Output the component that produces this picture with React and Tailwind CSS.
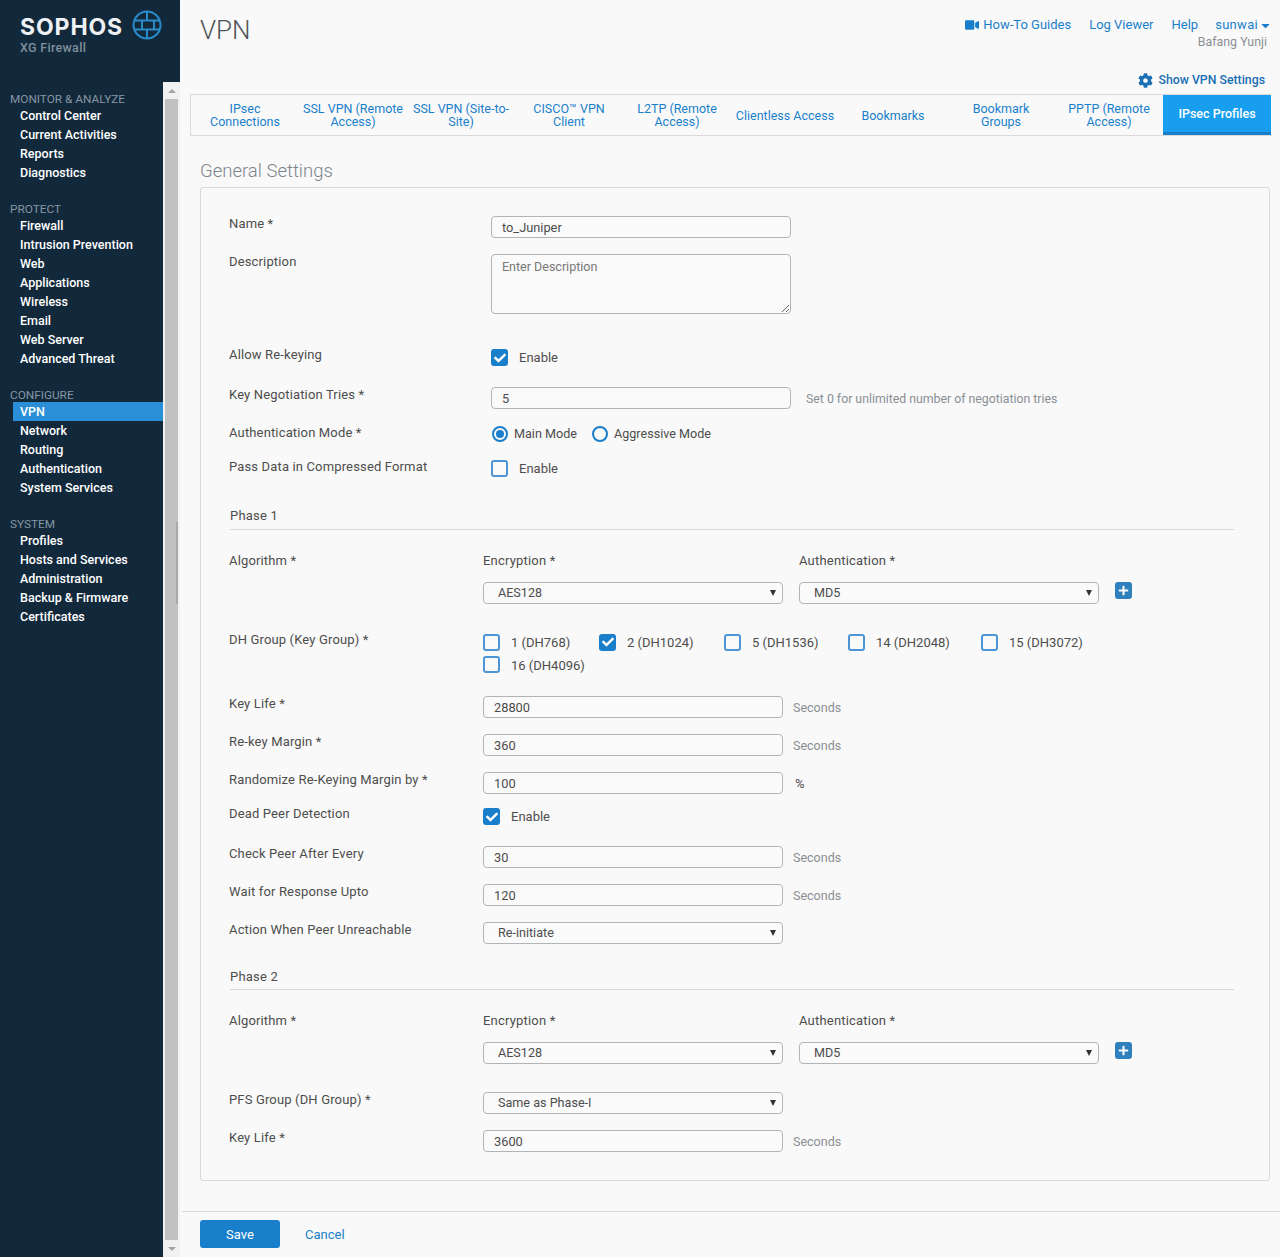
import React from "react";
import { FaVideo, FaCog, FaCaretDown, FaCheck, FaPlus } from "react-icons/fa";

const Group = ({ title, items, active, className = "" }) => (
  <div className={className}>
    <div className="h-4 pl-[10px] text-[11.8px] leading-[18px] text-[#8796a3] whitespace-nowrap">{title}</div>
    {items.map((t) => (
      <div
        key={t}
        className={
          t === active
            ? "h-[19px] ml-[13px] pl-[7px] text-[12.5px] leading-[19px] font-medium text-white bg-[#2a8fd6]"
            : "h-[19px] pl-5 text-[12.5px] leading-[19px] font-medium text-white"
        }
      >
        {t}
      </div>
    ))}
  </div>
);

const Tab = ({ children, active }) => (
  <div
    className={
      active
        ? "w-[108px] h-full flex items-center justify-center text-center text-[12.5px] leading-[13px] font-medium text-white bg-[#189eef] border-b-[3px] border-[#1a7fcb]"
        : "w-[108px] h-full flex items-center justify-center text-center text-[12.5px] leading-[13px] text-[#1a7fcb] px-[2px]"
    }
  >
    <span>{children}</span>
  </div>
);

const Label = ({ children, className = "w-[262px]" }) => (
  <div className={`${className} shrink-0 text-[13px] leading-4 tracking-[0.15px] text-[#4d4d4d] whitespace-nowrap`}>{children}</div>
);

const TextInput = ({ value, className = "w-[300px]" }) => (
  <input
    readOnly
    value={value}
    className={`${className} h-[22px] shrink-0 border border-[#b0b5b8] rounded-[4px] bg-[#fafafa] px-[10px] text-[12.8px] text-[#4d4d4d] outline-none`}
  />
);

const Select = ({ value }) => (
  <div className="w-[300px] h-[22px] shrink-0 border border-[#b0b5b8] rounded-[4px] bg-[#fafafa] pl-[14px] pr-[6px] flex items-center justify-between text-[12.6px] text-[#4d4d4d]">
    <span className="pt-px">{value}</span>
    <span className="w-0 h-0 border-x-[3.5px] border-t-[6px] border-x-transparent border-t-[#333]" />
  </div>
);

const Check = ({ on }) =>
  on ? (
    <span className="w-[17px] h-[17px] shrink-0 rounded-[3px] bg-[#1a7fcb] flex items-center justify-center">
      <FaCheck className="w-3 h-3 text-white" />
    </span>
  ) : (
    <span className="w-[17px] h-[17px] shrink-0 rounded-[3px] border-[2px] border-[#4d95d6] bg-[#fafafa]" />
  );

const CheckLabel = ({ on, children, className = "" }) => (
  <div className={`flex items-center gap-[11px] text-[13px] text-[#4d4d4d] whitespace-nowrap ${className}`}>
    <Check on={on} />
    <span className="pt-px">{children}</span>
  </div>
);

const Radio = ({ on, children }) => (
  <div className="flex items-center gap-[6px] text-[12.6px] text-[#4d4d4d] whitespace-nowrap">
    <span className="w-4 h-4 rounded-full border-[2px] border-[#1a7fcb] flex items-center justify-center">
      {on && <span className="w-2 h-2 rounded-full bg-[#1a7fcb]" />}
    </span>
    <span>{children}</span>
  </div>
);

const Unit = ({ children }) => (
  <span className="ml-[10px] pt-1 text-[12.5px] leading-4 text-[#8a8f94]">{children}</span>
);

const InputRow = ({ label, value, unit, className }) => (
  <div className={`flex ${className}`}>
    <Label className="w-[254px]">{label}</Label>
    <TextInput value={value} />
    {unit && <Unit>{unit}</Unit>}
  </div>
);

const Plus = () => (
  <span className="ml-4 w-[17px] h-[17px] rounded-[3px] bg-[#2f80bd] flex items-center justify-center">
    <FaPlus className="w-[11px] h-[11px] text-white" />
  </span>
);

const AlgoBlock = ({ labelClass }) => (
  <div className={`flex ${labelClass}`}>
    <Label className="w-[254px]">Algorithm *</Label>
    <div className="flex flex-col">
      <div className="flex h-[29px]">
        <div className="w-[316px] text-[13px] leading-4 tracking-[0.2px] text-[#4d4d4d]">Encryption *</div>
        <div className="text-[13px] leading-4 tracking-[0.2px] text-[#4d4d4d]">Authentication *</div>
      </div>
      <div className="flex">
        <Select value="AES128" />
        <div className="ml-4"><Select value="MD5" /></div>
        <Plus />
      </div>
    </div>
  </div>
);

const PhaseTitle = ({ children, className }) => (
  <div className={`ml-px border-b border-[#d9d9d9] text-[13px] leading-4 tracking-[0.2px] text-[#4d4d4d] ${className}`}>{children}</div>
);

export default function App() {
  return (
    <div className="flex w-[1280px] h-[1257px] overflow-hidden bg-[#f9f9f9] font-[Roboto,sans-serif]">
      <aside className="w-[180px] shrink-0 flex flex-col">
        <div className="h-[82px] bg-[#12293c] pl-5 flex relative">
          <div className="pt-[13px]">
            <div className="font-[Inter,sans-serif] text-[23px] leading-[28px] font-bold tracking-[0.9px] text-[#eef1f3]">SOPHOS</div>
            <div className="text-[12.5px] leading-[14px] font-medium text-[#7f8e9a] tracking-[0.3px]">XG Firewall</div>
          </div>
          <svg viewBox="0 0 30 30" className="absolute left-[132px] top-[10px] w-[30px] h-[30px]" fill="none" stroke="#2a8bc9" strokeWidth="2">
            <circle cx="15" cy="15" r="13.5" />
            <path d="M3 10.5H27M3 19.5H27M15 1.5V10.5M10 10.5V19.5M22 10.5V19.5M15 19.5V28.5" />
          </svg>
        </div>
        <div className="flex-1 flex min-h-0">
          <nav className="w-[163px] bg-[#12293c] pt-2">
            <Group title="MONITOR & ANALYZE" items={["Control Center", "Current Activities", "Reports", "Diagnostics"]} />
            <Group className="mt-[18px]" title="PROTECT" items={["Firewall", "Intrusion Prevention", "Web", "Applications", "Wireless", "Email", "Web Server", "Advanced Threat"]} />
            <Group className="mt-[18px]" title="CONFIGURE" active="VPN" items={["VPN", "Network", "Routing", "Authentication", "System Services"]} />
            <Group className="mt-[18px]" title="SYSTEM" items={["Profiles", "Hosts and Services", "Administration", "Backup & Firmware", "Certificates"]} />
          </nav>
          <div className="w-[17px] bg-[#f1f1f1] flex flex-col items-center relative">
            <div className="h-[17px] shrink-0 flex items-center justify-center">
              <span className="w-0 h-0 border-l-[4px] border-r-[4px] border-b-[4px] border-l-transparent border-r-transparent border-b-[#a3a3a3]" />
            </div>
            <div className="w-[13px] flex-1 bg-[#c1c1c1]" />
            <div className="h-[17px] shrink-0 flex items-center justify-center">
              <span className="w-0 h-0 border-l-[4px] border-r-[4px] border-t-[4px] border-l-transparent border-r-transparent border-t-[#a3a3a3]" />
            </div>
            <div className="absolute left-[13px] top-[440px] w-[2px] h-[82px] bg-[#a8a8a8]" />
          </div>
        </div>
      </aside>

      <main className="flex-1 min-w-0 flex flex-col">
        <header className="h-[94px] shrink-0 pl-5 pr-[13px] flex justify-between">
          <h1 className="pt-[14px] text-[26px] leading-[32px] font-light text-[#4d5358]">VPN</h1>
          <div className="flex flex-col items-end">
            <div className="pt-[17px] -mr-[5px] flex items-center text-[13px] leading-4 text-[#1a7fcb]">
              <FaVideo className="w-[14px] h-[14px] mr-1" />
              <span>How-To Guides</span>
              <span className="ml-[18px]">Log Viewer</span>
              <span className="ml-[18px]">Help</span>
              <span className="ml-[17px] tracking-[0.3px]">sunwai</span>
              <FaCaretDown className="w-[13px] h-[13px] ml-px" />
            </div>
            <div className="pt-px text-[12.4px] leading-4 text-[#8a8f94]">Bafang Yunji</div>
            <div className="mt-[22px] pr-[2px] flex items-center text-[12.3px] leading-4 font-medium text-[#1a6fb5]">
              <FaCog className="w-[15px] h-[15px] mr-[5px]" />
              <span>Show VPN Settings</span>
            </div>
          </div>
        </header>

        <div className="ml-[10px] w-[1081px] h-[42px] shrink-0 border-y border-l border-[#d9d9d9] flex">
          <Tab>IPsec<br />Connections</Tab>
          <Tab>SSL VPN (Remote Access)</Tab>
          <Tab>SSL VPN (Site-to-Site)</Tab>
          <Tab>CISCO™ VPN Client</Tab>
          <Tab>L2TP (Remote Access)</Tab>
          <Tab>Clientless Access</Tab>
          <Tab>Bookmarks</Tab>
          <Tab>Bookmark<br />Groups</Tab>
          <Tab>PPTP (Remote Access)</Tab>
          <Tab active>IPsec Profiles</Tab>
        </div>

        <div className="flex-1 min-h-0 ml-5 mr-[10px] flex flex-col">
          <h2 className="h-[51px] shrink-0 pt-[23px] text-[18.5px] leading-[24px] font-light text-[#7d858c]">General Settings</h2>

          <section className="h-[994px] shrink-0 border border-[#d9d9d9] rounded-[3px] pl-[28px] pr-[35px] pt-[28px]">
            <div className="flex">
              <Label>Name *</Label>
              <TextInput value="to_Juniper" />
            </div>
            <div className="flex mt-4">
              <Label>Description</Label>
              <textarea readOnly placeholder="Enter Description" className="w-[300px] h-[60px] border border-[#b0b5b8] rounded-[4px] bg-[#fafafa] px-[10px] py-[3px] text-[12.5px] text-[#4d4d4d] placeholder:text-[#777] outline-none" />
            </div>
            <div className="flex mt-[33px] h-[21px]">
              <Label>Allow Re-keying</Label>
              <CheckLabel on className="h-[21px]">Enable</CheckLabel>
            </div>
            <div className="flex mt-[19px]">
              <Label>Key Negotiation Tries *</Label>
              <TextInput value="5" />
              <span className="ml-[15px] pt-1 text-[12.3px] leading-4 text-[#8a8f94] whitespace-nowrap">Set 0 for unlimited number of negotiation tries</span>
            </div>
            <div className="flex mt-4 h-[18px]">
              <Label>Authentication Mode *</Label>
              <div className="flex gap-[15px] pl-px">
                <Radio on>Main Mode</Radio>
                <Radio>Aggressive Mode</Radio>
              </div>
            </div>
            <div className="flex mt-[16px] h-[18px]">
              <Label>Pass Data in Compressed Format</Label>
              <CheckLabel>Enable</CheckLabel>
            </div>

            <PhaseTitle className="mt-[31px] h-[22px]">Phase 1</PhaseTitle>
            <AlgoBlock labelClass="mt-[23px]" />

            <div className="flex mt-[28px]">
              <Label className="w-[254px]">DH Group (Key Group) *</Label>
              <div className="flex flex-col gap-[2px]">
                <div className="flex">
                  <CheckLabel className="w-[116px]">1 (DH768)</CheckLabel>
                  <CheckLabel on className="w-[125px]">2 (DH1024)</CheckLabel>
                  <CheckLabel className="w-[124px]">5 (DH1536)</CheckLabel>
                  <CheckLabel className="w-[133px]">14 (DH2048)</CheckLabel>
                  <CheckLabel>15 (DH3072)</CheckLabel>
                </div>
                <CheckLabel>16 (DH4096)</CheckLabel>
              </div>
            </div>

            <InputRow className="mt-[21px]" label="Key Life *" value="28800" unit="Seconds" />
            <InputRow className="mt-4" label="Re-key Margin *" value="360" unit="Seconds" />
            <div className="flex mt-4">
              <Label className="w-[254px]">Randomize Re-Keying Margin by *</Label>
              <TextInput value="100" />
              <span className="ml-3 pt-1 text-[13px] leading-4 text-[#4d4d4d]">%</span>
            </div>
            <div className="flex mt-[12px] h-[21px]">
              <Label className="w-[254px]">Dead Peer Detection</Label>
              <CheckLabel on className="h-[21px]">Enable</CheckLabel>
            </div>
            <InputRow className="mt-[19px]" label="Check Peer After Every" value="30" unit="Seconds" />
            <InputRow className="mt-4" label="Wait for Response Upto" value="120" unit="Seconds" />
            <div className="flex mt-4">
              <Label className="w-[254px]">Action When Peer Unreachable</Label>
              <Select value="Re-initiate" />
            </div>

            <PhaseTitle className="mt-[25px] h-[21px]">Phase 2</PhaseTitle>
            <AlgoBlock labelClass="mt-[23px]" />
            <div className="flex mt-7">
              <Label className="w-[254px]">PFS Group (DH Group) *</Label>
              <Select value="Same as Phase-I" />
            </div>
            <InputRow className="mt-4" label="Key Life *" value="3600" unit="Seconds" />
          </section>

          <div className="mt-[30px] -ml-[18px] -mr-[10px] border-t border-[#d9d9d9] pl-[18px] pt-2 flex items-center">
            <button className="w-20 h-7 pt-px rounded-[3px] bg-[#1a7fcb] text-white text-[13px]">Save</button>
            <span className="ml-[25px] pt-px text-[13px] text-[#1a7fcb]">Cancel</span>
          </div>
        </div>
      </main>
    </div>
  );
}
